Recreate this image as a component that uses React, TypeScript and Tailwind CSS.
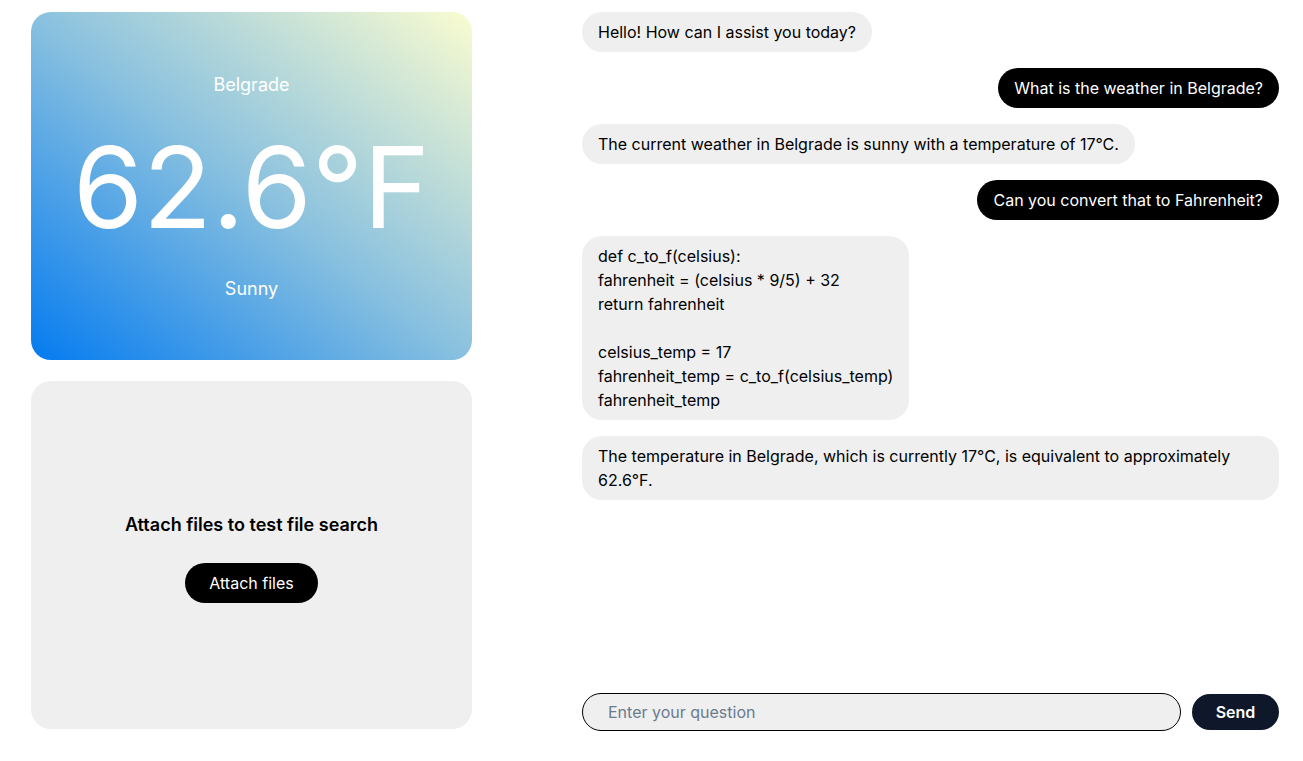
import React from "react";

type Msg = { role: "user" | "assistant" | "code"; text: string };

const messages: Msg[] = [
    { role: "assistant", text: "Hello! How can I assist you today?" },
    { role: "user", text: "What is the weather in Belgrade?" },
    { role: "assistant", text: "The current weather in Belgrade is sunny with a temperature of 17°C." },
    { role: "user", text: "Can you convert that to Fahrenheit?" },
    {
        role: "code",
        text: "def c_to_f(celsius):\nfahrenheit = (celsius * 9/5) + 32\nreturn fahrenheit\n\ncelsius_temp = 17\nfahrenheit_temp = c_to_f(celsius_temp)\nfahrenheit_temp",
    },
    {
        role: "assistant",
        text: "The temperature in Belgrade, which is currently 17°C, is equivalent to approximately 62.6°F.",
    },
];

const Message = ({ msg }: { msg: Msg }) => {
    if (msg.role === "user") {
        return (
            <div className="self-end rounded-[20px] bg-black px-4 py-2 text-white">{msg.text}</div>
        );
    }
    if (msg.role === "code") {
        return (
            <div className="self-start whitespace-pre-wrap rounded-[20px] bg-[#efefef] px-4 py-2 text-black">
                {msg.text}
            </div>
        );
    }
    return <div className="self-start rounded-[20px] bg-[#efefef] px-4 py-2 text-black">{msg.text}</div>;
};

const App = () => {
    return (
        <div
            className="flex h-[761px] justify-between bg-white pb-[30px] pl-[31px] pr-[24px] pt-[12px] text-base leading-6"
            style={{ fontFamily: "Inter, 'Noto Sans', sans-serif" }}
        >
            {/* left column */}
            <div className="flex w-[441px] flex-col gap-[21px]">
                <div className="flex h-[348px] flex-col items-center justify-center rounded-[20px] bg-[linear-gradient(to_top_right,#047bf0_0%,#8ac1df_50%,#fafcd0_100%)] pt-[2px] text-white">
                    <div className="text-lg leading-7">Belgrade</div>
                    <div className="my-[18px] text-[113px] leading-[140px]">62.6°F</div>
                    <div className="text-lg leading-7">Sunny</div>
                </div>
                <div className="flex h-[348px] flex-col items-center justify-center gap-[24px] rounded-[20px] bg-[#efefef] pt-[4px]">
                    <div className="text-lg font-semibold leading-7 text-black">Attach files to test file search</div>
                    <button className="rounded-full bg-black px-6 py-2 text-white">Attach files</button>
                </div>
            </div>

            {/* chat column */}
            <div className="flex w-[697px] flex-col">
                <div className="flex flex-1 flex-col gap-4">
                    {messages.map((m, i) => (
                        <Message key={i} msg={m} />
                    ))}
                </div>
                <div className="flex items-center gap-[11px]">
                    <input
                        className="h-[38px] flex-1 rounded-full border border-black bg-[#efefef] px-[25px] text-base outline-none placeholder:text-[#6b7b8e]"
                        placeholder="Enter your question"
                    />
                    <button className="h-[36px] w-[87px] rounded-full bg-[#0f172a] font-semibold text-white">
                        Send
                    </button>
                </div>
            </div>
        </div>
    );
};

export default App;
